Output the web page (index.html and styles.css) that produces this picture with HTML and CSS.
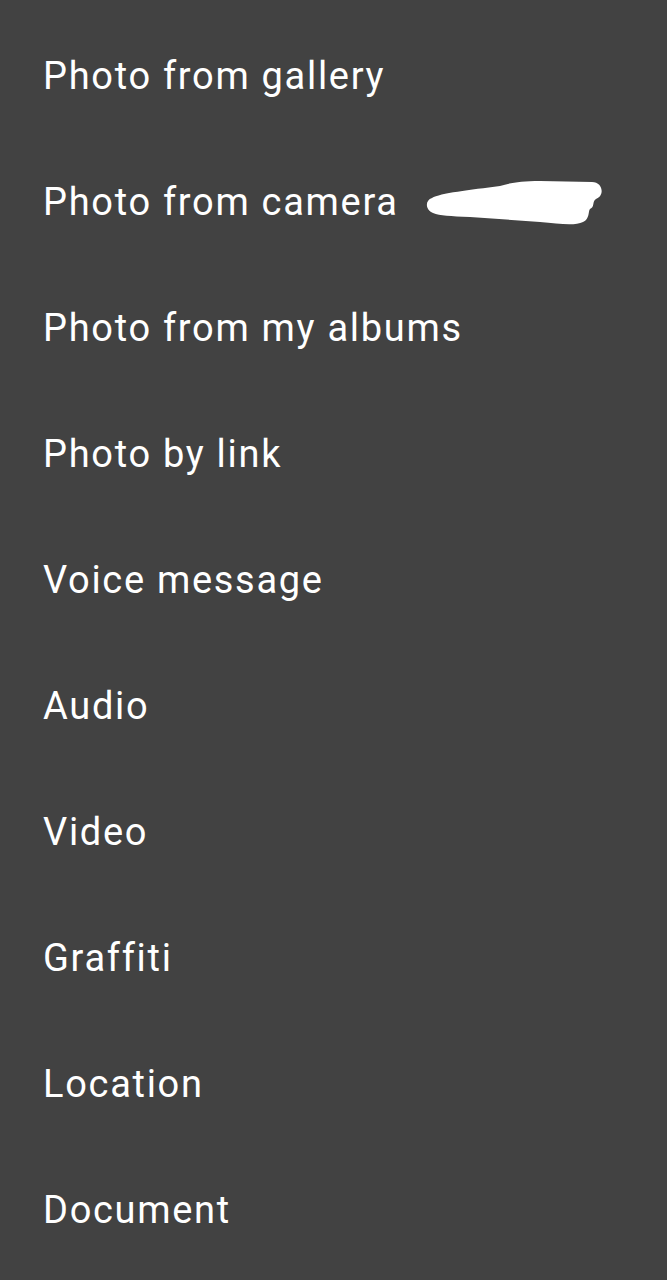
FILE: index.html
```html
<!doctype html>
<html lang="en">
  <head>
    <title>Attach</title>
    <link rel="stylesheet" href="styles.css">
  </head>
  <body>
    <ul class="menu">
      <li class="menu-item">Photo from gallery</li>
      <li class="menu-item">
        Photo from camera
        <!-- redaction scribble -->
        <svg class="scribble" viewBox="425 178 182 52" width="182" height="52">
          <path d="M432 198 C440 193 470 190 500 186 C510 183 520 181 540 181 L592 182 C603 182 605 196 596 199 C592 201 595 207 590 209 C588 211 590 219 583 222 C575 226 560 224 540 222 L470 217 C450 216 440 216 433 213 C425 210 425 200 432 198 Z" fill="#fff"/>
        </svg>
      </li>
      <li class="menu-item">Photo from my albums</li>
      <li class="menu-item">Photo by link</li>
      <li class="menu-item">Voice message</li>
      <li class="menu-item">Audio</li>
      <li class="menu-item">Video</li>
      <li class="menu-item">Graffiti</li>
      <li class="menu-item">Location</li>
      <li class="menu-item">Document</li>
    </ul>
  </body>
</html>
```

FILE: styles.css
```css
html,
body {
  margin: 0;
  height: 100%;
  background: #424242;
}

body {
  overflow: hidden;
  font-family: Roboto, "Noto Sans", sans-serif;
}

.menu {
  list-style: none;
  margin: 0;
  padding: 13px 0 0;
}

.menu-item {
  position: relative;
  height: 126px;
  line-height: 126px;
  padding-left: 43px;
  font-size: 38px;
  letter-spacing: 1.7px;
  color: #fff;
  white-space: nowrap;
}

.scribble {
  position: absolute;
  left: 425px;
  top: 39px;
}
```
